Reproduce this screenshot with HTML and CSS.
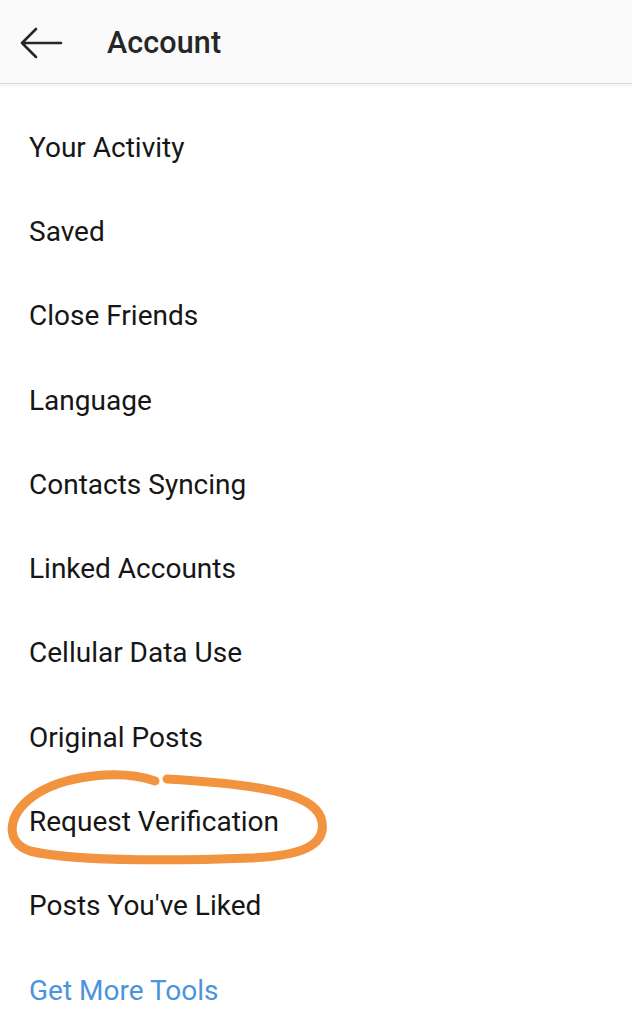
FILE: index.html
```html
<!DOCTYPE html>
<html>
<head>
<meta charset="utf-8">
<link rel="stylesheet" href="styles.css">
</head>
<body>
<div class="page">
  <header class="bar">
    <svg class="back" width="44" height="32" viewBox="0 0 44 32">
      <path d="M3 16 H42 M17 2 L3 16 L17 30" fill="none" stroke="#262626" stroke-width="2.6" stroke-linecap="round" stroke-linejoin="round"/>
    </svg>
    <h1 class="title">Account</h1>
  </header>
  <ul class="list">
    <li class="item">Your Activity</li>
    <li class="item">Saved</li>
    <li class="item">Close Friends</li>
    <li class="item">Language</li>
    <li class="item">Contacts Syncing</li>
    <li class="item">Linked Accounts</li>
    <li class="item">Cellular Data Use</li>
    <li class="item">Original Posts</li>
    <li class="item">Request Verification</li>
    <li class="item">Posts You've Liked</li>
    <li class="item link">Get More Tools</li>
  </ul>
  <svg class="scribble" width="632" height="1024" viewBox="0 0 632 1024">
    <path d="M155 781 C120 769 62 775 32 797 C8 815 4 842 30 851 C80 863 200 860 250 858 C300 856 326 846 322 822 C318 795 270 785 167 779" fill="none" stroke="#f2933f" stroke-width="9" stroke-linecap="round"/>
  </svg>
</div>
</body>
</html>
```
FILE: styles.css
```css
html, body {
  margin: 0;
  padding: 0;
  background: #ffffff;
}
.page {
  position: relative;
  width: 632px;
  height: 1024px;
  overflow: hidden;
  font-family: Roboto, "Liberation Sans", sans-serif;
}
.bar {
  height: 84px;
  background: #fafafa;
  border-bottom: 1px solid #dcdcdc;
  box-shadow: 0 2px 4px rgba(0,0,0,0.06);
  display: flex;
  align-items: center;
  box-sizing: border-box;
  padding-left: 19px;
}
.back {
  display: block;
  margin-top: 2px;
}
.title {
  margin: 2px 0 0 44px;
  font-size: 30.5px;
  font-weight: 500;
  color: #262626;
  letter-spacing: 0.1px;
}
.list {
  list-style: none;
  margin: 0;
  padding: 21px 0 0 0;
}
.item {
  height: 84.3px;
  display: flex;
  align-items: center;
  padding-left: 29px;
  box-sizing: border-box;
  font-size: 28px;
  color: #161616;
}
.link {
  color: #4a94dd;
}
.scribble {
  position: absolute;
  left: 0;
  top: 0;
  pointer-events: none;
}
```
